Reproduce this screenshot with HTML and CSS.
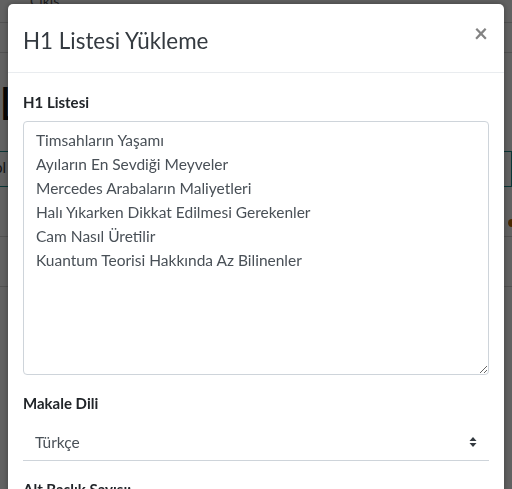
FILE: index.html
```html
<!DOCTYPE html>
<html lang="tr">
<head>
<meta charset="utf-8">
<title>H1 Listesi Yükleme</title>
<link rel="stylesheet" href="styles.css">
</head>
<body>
<div class="page">
  <div class="topbar"><a class="logout">Çıkış</a></div>
  <div class="subbar"></div>
  <h1 class="page-title">Liste</h1>
  <div class="search-row"><span class="search-input">ol</span></div>
  <div class="row"><span class="dot"></span></div>
  <div class="row"></div>
</div>
<div class="backdrop">
  <div class="modal">
    <div class="modal-header">
      <h5 class="modal-title">H1 Listesi Yükleme</h5>
      <button class="close" type="button" aria-label="Kapat">&times;</button>
    </div>
    <div class="modal-body">
      <div class="form-group">
        <label class="form-label">H1 Listesi</label>
        <textarea class="form-textarea">Timsahların Yaşamı
Ayıların En Sevdiği Meyveler
Mercedes Arabaların Maliyetleri
Halı Yıkarken Dikkat Edilmesi Gerekenler
Cam Nasıl Üretilir
Kuantum Teorisi Hakkında Az Bilinenler</textarea>
      </div>
      <div class="form-group">
        <label class="form-label label-select">Makale Dili</label>
        <div class="select">
          <span class="select-value">Türkçe</span>
          <svg class="select-arrow" width="8" height="12" viewBox="0 0 8 12"><path d="M4 1 L7.5 5 H0.5 Z M0.5 7 H7.5 L4 11 Z" fill="#343a40"/></svg>
        </div>
      </div>
      <div class="form-group">
        <label class="form-label">Alt Başlık Sayısı:</label>
      </div>
    </div>
  </div>
</div>
</body>
</html>
```

FILE: styles.css
```css
html, body {
  margin: 0;
  padding: 0;
  height: 489px;
  overflow: hidden;
}
body {
  font-family: Lato, "Open Sans", sans-serif;
  color: #212529;
  background: #fff;
}
/* underlying page */
.page {
  height: 489px;
}
.topbar {
  height: 30px;
  border-bottom: 1px solid #d6d6d6;
  position: relative;
}
.logout {
  display: block;
  padding-left: 30px;
  margin-top: -8px;
  font-size: 14px;
  color: #555;
  text-decoration: underline;
}
.subbar {
  height: 29px;
  border-bottom: 1px solid #d6d6d6;
}
.page-title {
  margin: 24px 0 0 -1px;
  font-size: 46px;
  font-weight: 400;
  line-height: 52px;
  color: #111;
}
.search-row {
  margin-top: 22px;
  height: 34px;
  border-top: 1px solid #1a8c8c;
  border-bottom: 1px solid #1a8c8c;
  border-right: 1px solid #1a8c8c;
}
.search-input {
  display: block;
  margin-left: -6px;
  padding-top: 6px;
  font-size: 15px;
  color: #333;
}
.row {
  height: 49px;
  border-bottom: 1px solid #d6d6d6;
  position: relative;
}
.dot {
  position: absolute;
  right: -4px;
  top: 32px;
  width: 8px;
  height: 8px;
  border-radius: 50%;
  background: #c06a00;
}
/* modal overlay */
.backdrop {
  position: fixed;
  inset: 0;
  background: rgba(0,0,0,0.62);
  padding: 4px 8px 0 8px;
}
.modal {
  background: #fff;
  border-radius: 5px;
  box-shadow: 0 0 6px rgba(0,0,0,0.35);
  height: 520px;
}
.modal-header {
  display: flex;
  justify-content: space-between;
  align-items: flex-start;
  height: 68px;
  padding: 0 15px;
  border-bottom: 1px solid #e9ecef;
}
.modal-title {
  margin: 22px 0 0 0;
  font-size: 22.4px;
  font-weight: 400;
  color: #343a40;
  line-height: 30px;
}
.close {
  margin: 17px 1px 0 0;
  padding: 0;
  border: 0;
  background: none;
  font-family: Lato, sans-serif;
  font-size: 24px;
  font-weight: 700;
  line-height: 24px;
  color: #838383;
}
.modal-body {
  padding: 19px 15px 0 15px;
}
.form-group {
  display: flex;
  flex-direction: column;
  margin-bottom: 18px;
}
.form-label {
  font-size: 15px;
  font-weight: 700;
  color: #212529;
  line-height: 20px;
  margin-bottom: 9px;
}
.label-select {
  margin-bottom: 8px;
}
.form-textarea {
  height: 254px;
  box-sizing: border-box;
  border: 1px solid #ced4da;
  border-radius: 4px;
  padding: 6px 12px;
  font-family: Lato, sans-serif;
  font-size: 15.5px;
  line-height: 24px;
  color: #495057;
  resize: vertical;
}
.select {
  display: flex;
  justify-content: space-between;
  align-items: center;
  height: 40px;
  padding: 3px 12px 0 12px;
  box-sizing: border-box;
  border-bottom: 1px solid #ced4da;
}
.select-value {
  font-size: 15.5px;
  color: #495057;
}
```
